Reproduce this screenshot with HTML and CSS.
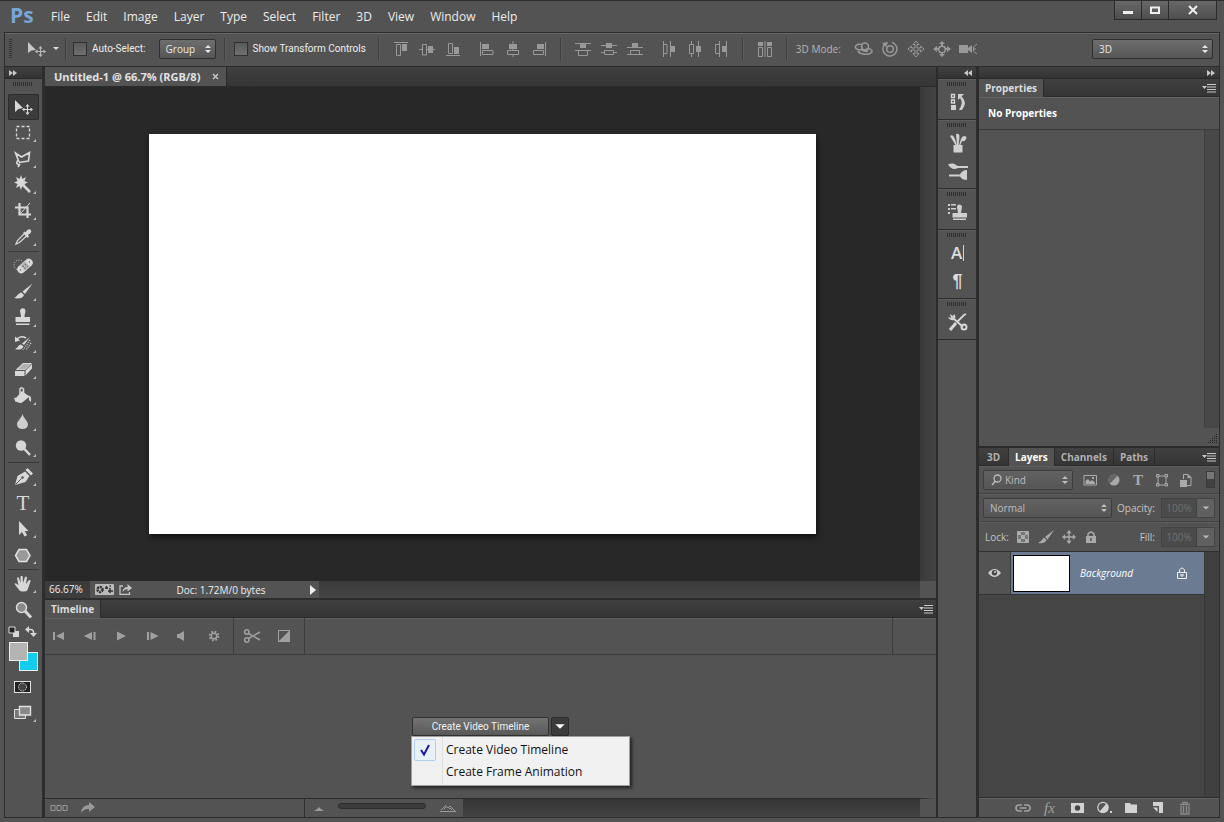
FILE: index.html
```html
<!DOCTYPE html>
<html lang="en">
<head>
<meta charset="utf-8">
<title>Untitled-1 @ 66.7% (RGB/8)</title>
<link rel="stylesheet" href="styles.css">
</head>
<body>
<svg class="defs" aria-hidden="true">
  <symbol id="updown" viewBox="0 0 8 10"><path d="M1 4L4 1L7 4ZM1 6L4 9L7 6Z" fill="currentColor"/></symbol>
  <symbol id="down" viewBox="0 0 10 6"><path d="M1 1H9L5 5Z" fill="currentColor"/></symbol>
  <symbol id="flyout" viewBox="0 0 14 10"><path d="M0 3H5L2.500 6ZM5 1H14V2H5ZM5 3.500H14V4.500H5ZM5 6H14V7H5ZM5 8.500H14V9.500H5Z" fill="currentColor"/></symbol>
  <symbol id="right2" viewBox="0 0 8 6"><path d="M0 0L4 3L0 6ZM4 0L8 3L4 6Z" fill="currentColor"/></symbol>
  <symbol id="left2" viewBox="0 0 8 6"><path d="M4 0L0 3L4 6ZM8 0L4 3L8 6Z" fill="currentColor"/></symbol>
  <symbol id="move" viewBox="0 0 12 12"><path d="M6 1V11M1 6H11" stroke="currentColor" stroke-width="1.200" fill="none"/><path d="M6 0L8.300 2.700H3.700ZM6 12L3.700 9.300H8.300ZM0 6L2.700 3.700V8.300ZM12 6L9.300 8.300V3.700Z" fill="currentColor"/></symbol>
  <symbol id="corner" viewBox="0 0 30 26"><path d="M28 19V22H25Z" fill="#bdbdbd"/></symbol>
</svg>
<div class="app">
  <header class="menubar">
    <span class="logo">Ps</span>
    <nav class="menus">
      <button>File</button><button>Edit</button><button>Image</button><button>Layer</button><button>Type</button><button>Select</button><button>Filter</button><button>3D</button><button>View</button><button>Window</button><button>Help</button>
    </nav>
    <div class="winbtns">
      <button aria-label="Minimize"><svg width="12" height="10" viewBox="0 0 12 10"><rect x="1" y="6" width="10" height="3" fill="#eee"/></svg></button>
      <button aria-label="Maximize"><svg width="12" height="10" viewBox="0 0 12 10"><path d="M2 2.500H10V8H2Z" fill="none" stroke="#eee" stroke-width="2"/></svg></button>
      <button class="close" aria-label="Close"><svg width="12" height="10" viewBox="0 0 12 10"><path d="M2 1L10 9M10 1L2 9" stroke="#eee" stroke-width="2"/></svg></button>
    </div>
  </header>

  <div class="options">
    <i class="vgrip"></i>
    <button class="current" aria-label="Move tool"><svg width="32" height="20" viewBox="0 0 32 20"><path d="M1 3V14L4.500 11.500L9 11Z" fill="#c8c8c8"/><use href="#move" x="8" y="7" width="11" height="11" color="#bbb"/><path d="M26 8H32L29 11Z" fill="#ddd"/></svg></button>
    <i class="sep"></i>
    <label class="check"><input type="checkbox">Auto-Select:</label>
    <div class="select group"><select aria-label="Auto-select target"><option>Group</option></select><svg width="8" height="10"><use href="#updown"/></svg></div>
    <i class="sep"></i>
    <label class="check"><input type="checkbox">Show Transform Controls</label>
    <i class="sep wide"></i>
    <div class="icons align">
      <button aria-label="Align top edges"><svg viewBox="0 0 16 16"><path d="M1 1.500H15M3.500 3.500H7.500V14.500H3.500Z"/><path class="f" d="M9 3H14V10H9Z"/></svg></button>
      <button aria-label="Align vertical centers"><svg viewBox="0 0 16 16"><path d="M0 8.500H3M7 8.500H16M3.500 3.500H7.500V14H3.500Z"/><path class="f" d="M9 5H14V12H9Z"/></svg></button>
      <button aria-label="Align bottom edges"><svg viewBox="0 0 16 16"><path d="M1 14.500H15M3.500 2.500H7.500V12.500H3.500Z"/><path class="f" d="M9 6H14V13H9Z"/></svg></button>
    </div>
    <div class="icons align">
      <button aria-label="Align left edges"><svg viewBox="0 0 16 16"><path d="M1.500 1V15M3.500 9.500H14V13.500H3.500Z"/><path class="f" d="M3 3H10V8H3Z"/></svg></button>
      <button aria-label="Align horizontal centers"><svg viewBox="0 0 16 16"><path d="M8 0V10M8 14V16M2.500 9.500H13.500V13.500H2.500Z"/><path class="f" d="M4 3H12V8H4Z"/></svg></button>
      <button aria-label="Align right edges"><svg viewBox="0 0 16 16"><path d="M14.500 1V15M2.500 9.500H12.500V13.500H2.500Z"/><path class="f" d="M6 3H13V8H6Z"/></svg></button>
    </div>
    <i class="sep"></i>
    <div class="icons align">
      <button aria-label="Distribute top edges"><svg viewBox="0 0 16 16"><path d="M0 2.500H16M0 9.500H16M3.500 9.500H12.500V14.500H3.500Z"/><path class="f" d="M5 3H11V7H5Z"/></svg></button>
      <button aria-label="Distribute vertical centers"><svg viewBox="0 0 16 16"><path d="M0 4.500H16M0 11.500H3M13 11.500H16M3.500 9.500H12.500V13.500H3.500Z"/><path class="f" d="M5 2H11V7H5Z"/></svg></button>
      <button aria-label="Distribute bottom edges"><svg viewBox="0 0 16 16"><path d="M0 6.500H16M0 13.500H16M3.500 9.500H12.500V13.500H3.500Z"/><path class="f" d="M5 2H11V6H5Z"/></svg></button>
    </div>
    <div class="icons align">
      <button aria-label="Distribute left edges"><svg viewBox="0 0 16 16"><path d="M2.500 0V16M9.500 0V16M2.500 3.500H6V12.500H2.500Z"/><path class="f" d="M10 5H14V11H10Z"/></svg></button>
      <button aria-label="Distribute horizontal centers"><svg viewBox="0 0 16 16"><path d="M4.500 0V3M4.500 13V16M11.500 0V16M2.500 3.500H6.500V12.500H2.500Z"/><path class="f" d="M9 5H14V11H9Z"/></svg></button>
      <button aria-label="Distribute right edges"><svg viewBox="0 0 16 16"><path d="M6.500 0V16M13.500 0V16M2.500 3.500H6.500V12.500H2.500Z"/><path class="f" d="M9 5H13V11H9Z"/></svg></button>
    </div>
    <i class="sep"></i>
    <div class="icons align">
      <button aria-label="Auto-align layers"><svg viewBox="0 0 16 16"><path d="M8 0V16M1.500 6.500H5.500V15.500H1.500ZM10.500 6.500H14.500V15.500H10.500Z"/><path class="f" d="M1 1H6V5H1ZM10 1H15V5H10Z"/></svg></button>
    </div>
    <i class="sep"></i>
    <span class="mode">3D Mode:</span>
    <div class="icons">
      <button aria-label="Rotate the 3D object"><svg width="20" height="16" viewBox="0 0 20 16"><g fill="none" stroke="#999" stroke-width="1.500"><circle cx="11" cy="5.500" r="3.500"/><path d="M8 3.500C3 2.500 0 5 2 7.500C4 10 11 8 14 10.500M8 5.500C7 9 10 11 13 10M12 8C18 7 20 11 16 12.500C12 14 5 13 4 10"/></g></svg></button>
      <button aria-label="Roll the 3D object"><svg width="20" height="16" viewBox="0 0 20 16"><g fill="none" stroke="#999" stroke-width="1.500"><circle cx="10" cy="8" r="3.300"/><path d="M5 3A7 7 0 1 0 12 1.300"/></g><path d="M2 2L8 1L6 6Z" fill="#999"/></svg></button>
      <button aria-label="Drag the 3D object"><svg width="20" height="16" viewBox="0 0 20 16"><path d="M10 0L13 3.500H11V7H14.500V5L18 8L14.500 11V9H11V12.500H13L10 16L7 12.500H9V9H5.500V11L2 8L5.500 5V7H9V3.500H7Z" fill="none" stroke="#999"/></svg></button>
      <button aria-label="Slide the 3D object"><svg width="20" height="16" viewBox="0 0 20 16"><path d="M10 0L13 3H11V5H13L14 7H15V5L19 8L15 11V9H14L13 12H11V13H13L10 16L7 13H9V12H7L6 9H5V11L1 8L5 5V7H6L7 5H9V3H7Z" fill="#999"/><circle cx="10" cy="8.500" r="2.500" fill="#535353"/></svg></button>
      <button aria-label="Zoom the 3D camera"><svg width="20" height="16" viewBox="0 0 20 16"><path d="M1 4H10V12H1ZM10 7L14 4V12L10 9Z" fill="#999"/><path d="M19 3L15.500 6V10L19 13M15.500 8H18" fill="none" stroke="#999"/></svg></button>
    </div>
    <div class="select workspace"><select aria-label="Workspace"><option>3D</option></select><svg width="8" height="10"><use href="#updown"/></svg></div>
  </div>

  <div class="work">
    <aside class="tools">
      <div class="collapse start"><svg width="8" height="6"><use href="#right2"/></svg></div>
      <i class="grip"></i>
      <div class="toollist">
        <button class="on" aria-label="Move"><svg viewBox="0 0 30 26"><path d="M7 6V18L10.500 15L15 14Z"/><use href="#move" x="14" y="10" width="11" height="11"/></svg></button>
        <button aria-label="Marquee"><svg viewBox="0 0 30 26"><rect class="l" x="8.500" y="6.500" width="13" height="12" stroke-width="1.300" stroke-dasharray="3 2"/><use href="#corner"/></svg></button>
        <button aria-label="Lasso"><svg viewBox="0 0 30 26"><path class="l" stroke-width="1.600" d="M11 16L7.500 7L13.500 11L21.500 6.500L20.500 15L11 16.500M11 14.500A2 2 0 1 0 12 18L10 21"/><use href="#corner"/></svg></button>
        <button aria-label="Magic wand"><svg viewBox="0 0 30 26"><path d="M13 3L14.300 7L18 5L16.500 9L20 10.500L16.500 12L18 16L14.300 14L13 18L11.500 14L8 16L9.500 12L6 10.500L9.500 9L8 5L11.500 7Z"/><path class="l" stroke-width="2.500" d="M15 13L22 20"/><use href="#corner"/></svg></button>
        <button aria-label="Crop"><svg viewBox="0 0 30 26"><path class="l" stroke-width="2.200" d="M7 9.500H19.500V20M11.500 5V16.500H23"/><path class="l" d="M12 16L22 5"/><use href="#corner"/></svg></button>
        <button aria-label="Eyedropper"><svg viewBox="0 0 30 26"><path d="M15 9L16.500 7.500L17.500 8.300L19.500 5.800Q22 4.300 23 6.200Q24 8 22 9.500L20 11L21 12.500L19.500 14Z"/><path class="l" stroke-width="1.300" d="M16 10L9.500 16.500L8 20L11.500 18.500L18.500 12"/><use href="#corner"/></svg></button>
        <hr>
        <button aria-label="Healing brush"><svg viewBox="0 0 30 26"><circle class="l" cx="11" cy="12" r="5" stroke-dasharray="1 1.500"/><g transform="rotate(-42 17 13)"><rect x="8" y="9" width="18" height="8" rx="4"/><rect x="14" y="9.500" width="6" height="7" fill="#b4b4b4"/><path d="M15 12H16M18 12H19M15 14.500H16M18 14.500H19M10.500 13H11.500M22.500 13H23.500" stroke="#444"/></g><use href="#corner"/></svg></button>
        <button aria-label="Brush"><svg viewBox="0 0 30 26"><path d="M24.500 4.500L17 15L14.500 12.500ZM13.500 13.500L16 16C15 19.500 10 20 6 19C9 18 10 14 13.500 13.500Z"/><use href="#corner"/></svg></button>
        <button aria-label="Clone stamp"><svg viewBox="0 0 30 26"><path d="M12 5.500A2.800 2.800 0 0 1 17.500 5.500C17.500 8 16.500 9 16.500 12H22V17H7.500V12H13C13 9 12 8 12 5.500ZM8 18.500H21.500V20H8Z"/><use href="#corner"/></svg></button>
        <button aria-label="History brush"><svg viewBox="0 0 30 26"><path d="M22 6L16 14L14 12.500ZM13 13.500L15.500 15.500C14 19 10 19 7 18C10 17 10 14 13 13.500Z"/><path class="l" stroke-width="1.500" d="M9 8Q13 4 18 7"/><path d="M7 5.500V11L12 9.500Z"/><path class="l" stroke-width="1.300" stroke-dasharray="1 1.300" d="M22 9L15 19M23 12L18 19"/><use href="#corner"/></svg></button>
        <button aria-label="Eraser"><svg viewBox="0 0 30 26"><path d="M15 6H24L17 13H7.500ZM7 14H16.500V19H7ZM17.500 13.500L24 7V11.500L17.500 18.500Z"/><path d="M15.500 7H22L16.500 12.300H10Z" fill="#b0b0b0"/><use href="#corner"/></svg></button>
        <button aria-label="Paint bucket"><svg viewBox="0 0 30 26"><path d="M7 16L14 8L20 12.500Q24 12 23 19L21 17V14L13.500 20Q7.500 20 7 16Z"/><path class="l" stroke-width="1.500" d="M12 11V6Q13.500 3.500 15.500 6V11"/><path d="M6 15Q8 13 9 18L7.500 19Z"/><use href="#corner"/></svg></button>
        <button aria-label="Blur"><svg viewBox="0 0 30 26"><path d="M14.500 5C16 10 20 12 20 15.500Q19.500 20 14.500 20Q9.500 20 9 15.500C9 12 13 10 14.500 5Z" fill="#cfcfcf"/><use href="#corner"/></svg></button>
        <button aria-label="Dodge"><svg viewBox="0 0 30 26"><circle cx="13" cy="10.500" r="5.200"/><path class="l" stroke-width="2.500" d="M16 13.500L22 20"/><use href="#corner"/></svg></button>
        <hr>
        <button aria-label="Pen"><svg viewBox="0 0 30 26"><path d="M7 21L9.500 12L17 7.500L21.500 12L17.500 18ZM17.500 6L19.500 4L25 9.500L23 11.500Z"/><path d="M7.500 20.500L13.500 14.500" stroke="#555"/><circle cx="14.500" cy="13.500" r="1.300" fill="#555"/><use href="#corner"/></svg></button>
        <button aria-label="Type" class="serif"><span>T</span><svg viewBox="0 0 30 26"><use href="#corner"/></svg></button>
        <button aria-label="Path selection"><svg viewBox="0 0 30 26"><path d="M11 5V19L14 16L16.500 20.500L19 19.300L16.800 15H20.500Z"/><use href="#corner"/></svg></button>
        <button aria-label="Polygon shape"><svg viewBox="0 0 30 26"><path d="M11 7.500H18.500L22 13.500L18.500 19.500H11L7.500 13.500Z" fill="#999" stroke="#e2e2e2" stroke-width="1.500"/><use href="#corner"/></svg></button>
        <hr>
        <button aria-label="Hand"><svg viewBox="0 0 30 26"><path d="M12 20L6.500 13Q7 11.500 9 13L10.500 14.500L9 7Q10 5.500 11 7L12.500 12V5.500Q13.700 4 14.700 5.500L15 12L17 6Q18.500 5 19 6.500L18 13L21 9Q23 8.500 22.500 10.500L19.500 19Q18 21.500 12 20Z"/><use href="#corner"/></svg></button>
        <button aria-label="Zoom"><svg viewBox="0 0 30 26"><path class="l" stroke-width="3" d="M17 14L23 20.500"/><circle cx="13.500" cy="10.500" r="5" fill="#8a8a8a" stroke="#ddd" stroke-width="1.500"/></svg></button>
        <div class="mini">
          <button aria-label="Default colors"><svg width="11" height="11" viewBox="0 0 11 11"><path d="M5 5H11V11H5Z"/><path d="M1 1H7V7H1Z" fill="#222" stroke="#ddd"/></svg></button>
          <button aria-label="Swap colors"><svg width="12" height="11" viewBox="0 0 12 11"><path class="l" stroke-width="1.500" d="M3 3.500H6Q9 4 8.500 8"/><path d="M0 3.500L4 0V7ZM5 7H12L8.500 11Z"/></svg></button>
        </div>
        <div class="swatches"><button class="bg" aria-label="Background color"></button><button class="fg" aria-label="Foreground color"></button></div>
        <button aria-label="Quick mask"><svg viewBox="0 0 30 26"><rect x="6.500" y="7.500" width="16" height="11" fill="#222" stroke="#e2e2e2"/><circle cx="14.500" cy="13" r="4" fill="#444" stroke="#ddd" stroke-dasharray="1.300 1"/></svg></button>
        <button aria-label="Screen mode"><svg viewBox="0 0 30 26"><path d="M6.500 9.500H17.500V18.500H6.500Z" fill="#777" stroke="#ddd"/><path d="M11.500 6.500H22.500V15H11.500Z" fill="#888" stroke="#e2e2e2" stroke-width="1.400"/><use href="#corner"/></svg></button>
      </div>
    </aside>

    <main class="center">
      <div class="doctabs"><div class="doctab">Untitled-1 @ 66.7% (RGB/8)<button aria-label="Close document"><svg width="7" height="7" viewBox="0 0 7 7"><path d="M1 1L6 6M6 1L1 6" stroke="#ccc" stroke-width="1.300"/></svg></button></div></div>
      <div class="doc">
        <div class="stage"><div class="artboard"></div></div>
        <div class="vscroll"></div>
        <div class="status">
          <input class="zoom" aria-label="Zoom level" value="66.67%">
          <div class="info">
            <svg width="19" height="11" viewBox="0 0 19 11"><rect width="19" height="11" rx="1" fill="#bbb"/><circle cx="5" cy="5.500" r="2.500" fill="none" stroke="#333" stroke-width="2.500" stroke-dasharray="2 .8"/><path d="M10 4H13M11.500 2V5M13 7H18M15 4V9M14.500 2H16" fill="none" stroke="#333" stroke-width="1.500"/></svg>
            <svg width="13" height="11" viewBox="0 0 13 11"><path d="M4 2H1V10.500H10.500V8" fill="none" stroke="#c4c4c4" stroke-width="1.300"/><path d="M3.500 8Q4 3 8.500 3V0L13 4L8.500 7.500V5Q5.500 5 3.500 8Z" fill="#c4c4c4"/></svg>
            <span>Doc: 1.72M/0 bytes</span>
            <button aria-label="Status options"><svg width="6" height="10" viewBox="0 0 6 10"><path d="M0 0L6 5L0 10Z" fill="#eee"/></svg></button>
          </div>
        </div>
        <div class="scrollcorner"></div>
      </div>

      <section class="timeline">
        <div class="tabs"><button class="tab on">Timeline</button><svg class="fly" width="14" height="10"><use href="#flyout"/></svg></div>
        <div class="transport">
          <div class="play">
            <button aria-label="First frame"><svg viewBox="0 0 16 16"><path d="M2 4H4V12H2ZM13 4V12L5 8Z"/></svg></button>
            <button aria-label="Previous frame"><svg viewBox="0 0 16 16"><path d="M10 4V12L2 8ZM11.500 4H13.500V12H11.500Z"/></svg></button>
            <button aria-label="Play"><svg viewBox="0 0 16 16"><path d="M4 3.500V12.500L13 8Z"/></svg></button>
            <button aria-label="Next frame"><svg viewBox="0 0 16 16"><path d="M3 4H5V12H3ZM6.500 4V12L14.500 8Z"/></svg></button>
            <button aria-label="Mute audio"><svg viewBox="0 0 16 16"><path d="M2 6H4L9 3V13L4 10H2Z"/></svg></button>
            <button aria-label="Timeline settings"><svg viewBox="0 0 16 16"><circle cx="8" cy="8" r="4.300" fill="none" stroke="#a0a0a0" stroke-width="2" stroke-dasharray="1.800 1.580"/><circle cx="8" cy="8" r="2.800" fill="none" stroke="#a0a0a0" stroke-width="1.500"/></svg></button>
          </div>
          <div class="edit">
            <button aria-label="Split at playhead"><svg viewBox="0 0 18 16"><g fill="none" stroke="#a0a0a0" stroke-width="1.500"><circle cx="3.800" cy="4" r="2.200"/><circle cx="3.800" cy="12" r="2.200"/><path d="M5.500 5.500L17 12M5.500 10.500L17 4"/></g></svg></button>
            <button aria-label="Transition"><svg viewBox="0 0 16 16"><rect x="2.500" y="2.500" width="11" height="11" fill="none" stroke="#a0a0a0"/><path d="M13 3V13H3Z"/></svg></button>
          </div>
          <div class="trackend"></div>
        </div>
        <div class="tbody">
          <div class="create">
            <button class="primary">Create Video Timeline</button>
            <button class="drop" aria-label="Timeline type"><svg width="12" height="7" viewBox="0 0 10 6"><use href="#down" width="10" height="6"/></svg></button>
            <div class="popup" role="menu">
              <button role="menuitemradio" aria-checked="true"><i class="mark"><svg width="12" height="14" viewBox="0 0 12 14"><path d="M2 7L5 11.500L10 2" fill="none" stroke="#1c1c9c" stroke-width="2"/></svg></i>Create Video Timeline</button>
              <button role="menuitemradio" aria-checked="false"><i></i>Create Frame Animation</button>
            </div>
          </div>
        </div>
        <div class="tfoot">
          <div class="tfleft">
            <button aria-label="Convert to frame animation"><svg width="18" height="8" viewBox="0 0 18 8"><path d="M1 1.500H5V6.500H1ZM7 1.500H11V6.500H7ZM13 1.500H17V6.500H13Z" fill="none" stroke="#999"/></svg></button>
            <button aria-label="Render video"><svg width="14" height="12" viewBox="0 0 14 12"><path d="M0 11Q1 3 8 3V0L14 5L8 10V7Q3 6.500 0 11Z" fill="#999"/></svg></button>
          </div>
          <div class="tfzoom">
            <svg width="10" height="5" viewBox="0 0 10 5"><path d="M0 5L3 3L4 2L5 1L7 3L10 5Z" fill="#999"/></svg>
            <input type="range" aria-label="Timeline zoom" value="0">
            <svg width="16" height="8" viewBox="0 0 16 8"><path d="M0 7.500H16M1 6L6 1.500L8 4L10 2L15 7M4 5L6 3M9 5L10 4L12 6" stroke="#999" fill="none"/></svg>
          </div>
        </div>
      </section>
    </main>

    <aside class="dock">
      <div class="collapse end"><svg width="8" height="6"><use href="#left2"/></svg></div>
      <div class="dg"><i class="grip"></i>
        <button aria-label="History"><svg viewBox="0 0 20 20"><path d="M3.500 2.500H6.500V5.500H3.500ZM3.500 8H6.500V11H3.500Z" class="l" stroke-width="1.300"/><path d="M3 13H8V18H3ZM10 2H16L13.500 4.500Q20 10 14 18H11Q16 10 12 6L10 8Z"/></svg></button></div>
      <div class="dg"><i class="grip"></i>
        <button aria-label="Brushes"><svg viewBox="0 0 20 20"><path d="M5.500 12H14.500V19.500H5.500ZM8 1Q11.500 0 11.500 4L10.500 12H9ZM2 3Q5 1 6.500 5L9 12H7.500ZM18.500 4Q15 1 13 6L11 12H12.500L14 8Q18 9 18.500 4Z"/></svg></button>
        <button aria-label="Brush presets"><svg viewBox="0 0 20 20"><path d="M0 3.500Q5 1.500 8 4L10 5H20V7H10Q4 10 0 3.500ZM1 13.500H12Q14 9 19 9V19Q14 19 12 15.500H1Z"/></svg></button></div>
      <div class="dg"><i class="grip"></i>
        <button aria-label="Clone source"><svg viewBox="0 0 20 20"><path d="M0 2H2V4H0ZM3 2H8V3.500H3ZM0 6H2V8H0ZM3 6H8V7.500H3ZM0 10H2V12H0ZM9 5A2.500 2.500 0 0 1 14 5L13 11H19V15.500H4.500V11H10ZM5 16.500H18V18H5Z"/></svg></button></div>
      <div class="dg"><i class="grip"></i>
        <button class="char" aria-label="Character">A<i class="caret"></i></button>
        <button class="para" aria-label="Paragraph">¶</button></div>
      <div class="dg"><i class="grip"></i>
        <button aria-label="Tool presets"><svg viewBox="0 0 20 20"><path class="l" stroke-width="3" d="M2 18L8 11"/><path class="l" stroke-width="1.800" d="M9 10L16 3L18 2M5 6L15 15"/><path d="M2 2L5 4L6 2Q9 5 6 8Q2 9 0 5L3 6Z"/><circle class="l" stroke-width="2" cx="16" cy="15" r="2.500"/></svg></button></div>
    </aside>

    <aside class="panels">
      <div class="collapse end"><svg width="8" height="6"><use href="#right2"/></svg></div>
      <section class="props">
        <div class="tabs"><button class="tab on">Properties</button><svg class="fly" width="14" height="10"><use href="#flyout"/></svg></div>
        <h2>No Properties</h2>
        <div class="pbody"><div></div><div class="pscroll"></div><svg class="resize" width="10" height="10" viewBox="0 0 10 10"><path d="M9.500 0V10M7.500 2V10M5.500 4V10M3.500 6V10M1.500 8V10" stroke="#222" stroke-dasharray="1 1"/></svg></div>
      </section>
      <section class="layers">
        <div class="tabs"><button class="tab">3D</button><button class="tab on bright">Layers</button><button class="tab">Channels</button><button class="tab">Paths</button><svg class="fly" width="14" height="10"><use href="#flyout"/></svg></div>
        <div class="lrow filter">
          <div class="select kind"><svg class="mag" width="11" height="12" viewBox="0 0 11 12"><circle cx="6.500" cy="4.500" r="3.500" fill="none" stroke="#bbb" stroke-width="1.300"/><path d="M4.500 7L1 11" stroke="#bbb" stroke-width="1.500"/></svg><select aria-label="Filter kind"><option>Kind</option></select><svg width="8" height="10"><use href="#updown"/></svg></div>
          <div class="ficons">
            <button aria-label="Pixel layers"><svg viewBox="0 0 14 14"><path d="M1 2.500H13.500V12H1Z" fill="none" stroke="#aaa"/><path d="M2.500 11V8L5 6L7 8.500L9 7L12 9.500V11ZM9 4H11V6H9Z"/></svg></button>
            <button aria-label="Adjustment layers"><svg viewBox="0 0 14 14"><circle cx="7" cy="7" r="5.500"/><path d="M3 10.500A5 5 0 0 1 10.500 3Z" fill="#666"/></svg></button>
            <button class="serif" aria-label="Type layers">T</button>
            <button aria-label="Shape layers"><svg viewBox="0 0 14 14"><path d="M3 3H11V12H3Z" fill="none" stroke="#aaa"/><path d="M1.500 1.500H4V4H1.500ZM10 1.500H12.500V4H10ZM1.500 10.500H4V13H1.500ZM10 10.500H12.500V13H10Z" fill="#666" stroke="#aaa"/></svg></button>
            <button aria-label="Smart objects"><svg viewBox="0 0 14 14"><path d="M4.500 6V1.500H9L12 4.500V12.500H8" fill="none" stroke="#aaa"/><path d="M1 7H8V14H1ZM8.500 1L12.500 5H8.500Z"/></svg></button>
          </div>
          <button class="toggle" aria-label="Toggle filtering"></button>
        </div>
        <div class="lrow">
          <div class="select blend"><select aria-label="Blend mode"><option>Normal</option></select><svg width="8" height="10"><use href="#updown"/></svg></div>
          <label class="num">Opacity:<input value="100%"></label><button class="step" aria-label="Opacity slider"><svg width="8" height="6" viewBox="0 0 10 6"><use href="#down" width="10" height="6"/></svg></button>
        </div>
        <div class="lrow lock">
          <span>Lock:</span>
          <div class="licons">
            <button aria-label="Lock transparency"><svg viewBox="0 0 14 14"><path d="M1.500 1.500H12.500V12.500H1.500Z" fill="#777" stroke="#aaa"/><path d="M2 2H5V5H2ZM9 2H12V5H9ZM5 5H9V9H5ZM2 9H5V12H2ZM9 9H12V12H9Z"/></svg></button>
            <button aria-label="Lock pixels"><svg viewBox="0 0 16 14"><path d="M16 0L9.500 9.500L7 7ZM6 7.500L8.500 10Q7 14 0 13Q3 12 6 7.500Z"/></svg></button>
            <button aria-label="Lock position"><svg viewBox="0 0 14 14"><use href="#move" x="0" y="0" width="14" height="14"/></svg></button>
            <button aria-label="Lock all"><svg viewBox="0 0 14 14"><path d="M4 6V4Q7 0 10 4V6" fill="none" stroke="#aaa" stroke-width="1.500"/><path d="M2 6H12V13H2Z"/><path d="M7 8V11" stroke="#555" stroke-width="1.500"/></svg></button>
          </div>
          <label class="num">Fill:<input value="100%"></label><button class="step" aria-label="Fill slider"><svg width="8" height="6" viewBox="0 0 10 6"><use href="#down" width="10" height="6"/></svg></button>
        </div>
        <div class="list">
          <div class="items">
            <div class="layer">
              <button class="eye" aria-label="Toggle visibility"><svg width="13" height="10" viewBox="0 0 13 10"><path d="M0 5Q6.500 -3 13 5Q6.500 13 0 5Z" fill="#ccc"/><circle cx="6.500" cy="4.800" r="2.700" fill="#444"/><circle cx="7" cy="4" r="1" fill="#ddd"/></svg></button>
              <div class="lsel"><span class="thumb"></span><em>Background</em><svg width="10" height="12" viewBox="0 0 10 12"><path d="M2.500 5V3Q5 -1 7.500 3V5M.500 5.500H9.500V11.500H.500ZM3 8H7M5 7V10" fill="none" stroke="#eee"/></svg></div>
            </div>
          </div>
          <div class="lscroll"></div>
        </div>
        <div class="lfoot">
          <button class="dim" aria-label="Link layers"><svg viewBox="0 0 16 14"><path d="M7 10H4Q1 10 1 7Q1 4 4 4H7M9 4H12Q15 4 15 7Q15 10 12 10H9M4.500 7H11.500" fill="none" stroke="#a0a0a0" stroke-width="1.600"/></svg></button>
          <button class="dim fx" aria-label="Layer style">fx</button>
          <button aria-label="Add mask"><svg viewBox="0 0 16 14"><path d="M2 2H15V12H2Z"/><circle cx="8.500" cy="7" r="2.700" fill="#444"/></svg></button>
          <button aria-label="Adjustment layer"><svg viewBox="0 0 16 14"><circle cx="7" cy="6.500" r="5.800"/><path d="M4 10A4.500 4.500 0 0 1 10 3Z" fill="#555"/><path d="M14 10H16V12H14Z"/></svg></button>
          <button aria-label="New group"><svg viewBox="0 0 16 14"><path d="M2 2H7L8 3.500H14V12H2Z"/></svg></button>
          <button aria-label="New layer"><svg viewBox="0 0 16 14"><path d="M3 1H13V12H9V5H3Z"/><path d="M3 6.500H7.500V11Z"/></svg></button>
          <button class="dim" aria-label="Delete layer"><svg viewBox="0 0 16 14"><path d="M3 3.500H13M6 3V1.500H10V3M4 5V13H12V5M6.500 5V12M9.500 5V12" fill="none" stroke="#8a8a8a" stroke-width="1.300"/></svg></button>
        </div>
      </section>
    </aside>
  </div>
</div>
</body>
</html>
```
FILE: styles.css
```css
* { box-sizing: border-box; }
html, body { height: 100%; margin: 0; }
body {
  background: #535353;
  color: #e2e2e2;
  font: 10px/14px "Open Sans", "Noto Sans", sans-serif;
}
button, input, select { font: inherit; color: inherit; margin: 0; }
button { background: none; border: 0; padding: 0; display: flex; align-items: center; justify-content: center; }
svg { display: block; flex: none; }
i { display: block; flex: none; }
.defs { position: absolute; width: 0; height: 0; }

.app {
  display: flex; flex-direction: column; height: 100vh;
  border-top: 1px solid #2e2e2e;
  padding: 0 4px 4px;
}

/* Title and menu bar */
.menubar { display: flex; height: 32px; flex: none; align-items: flex-start; }
.logo { width: 39px; padding-left: 6px; font: bold 21px/28px "Open Sans", sans-serif; color: #76a5d8; }
.menus { display: flex; height: 32px; flex: 1; font: 12px/16px "Open Sans", sans-serif; color: #ececec; }
.menus button { padding: 0 8px; }
.winbtns { display: flex; border: 1px solid #2b2b2b; border-top: 0; margin-right: 3px; }
.winbtns button { width: 27px; height: 18px; background: linear-gradient(#686868, #4e4e4e); border-right: 1px solid #2b2b2b; }
.winbtns .close { width: 47px; border-right: 0; }

/* Options bar */
.options {
  display: flex; align-items: center; height: 35px; flex: none;
  border: 1px solid #2c2c2c;
  box-shadow: inset 0 1px #676767;
  padding: 0 6px 1px 4px; margin-top: -1px;
}
.vgrip { width: 3px; height: 20px; background: repeating-linear-gradient(#333 0 1px, #535353 1px 2px); }
.current { margin: 0 6px 0 15px; }
.sep { width: 2px; height: 22px; background: #3d3d3d; border-right: 1px solid #5d5d5d; margin: 0 8px; }
.current + .sep { margin: 0 6px 0 0; }
.sep.wide { margin: 0 8px 0 12px; }
.check { display: flex; align-items: center; gap: 5px; white-space: nowrap; color: #eee; }
.options .check { font-family: Roboto, "Open Sans", sans-serif; }
.check input {
  appearance: none; width: 14px; height: 14px;
  background: linear-gradient(#5a5a5a, #707070); border: 1px solid #303030;
}
.select { position: relative; display: flex; align-items: center; border: 1px solid #2f2f2f; border-radius: 2px; background: linear-gradient(#6e6e6e, #565656); height: 20px; color: #e8e8e8; }
.select select { appearance: none; background: none; border: 0; padding: 0 6px; width: 100%; height: 100%; outline: 0; }
.select > svg:last-child { position: absolute; right: 3px; top: 4px; pointer-events: none; }
.group { width: 57px; margin-left: 13px; }
.icons { display: flex; }
.icons button { width: 26px; height: 24px; }
.align svg { width: 16px; height: 16px; fill: none; stroke: #999; }
.align .f { fill: #999; stroke: none; }
.align + .align { margin-left: 8px; }
.mode { color: #b5b5b5; margin-right: 10px; white-space: nowrap; }
.workspace { width: 121px; margin-left: auto; }

/* Work area */
.work { display: flex; flex: 1; min-height: 0; border: 1px solid #2c2c2c; border-top: 0; }
.collapse { height: 12px; flex: none; display: flex; align-items: center; background: linear-gradient(#404040, #333); border-bottom: 1px solid #282828; color: #c8c8c8; padding: 0 4px; }
.collapse.end { justify-content: flex-end; }
.grip { width: 20px; height: 4px; background: repeating-linear-gradient(90deg, #2f2f2f 0 1px, #535353 1px 2px); }

.tools { width: 40px; flex: none; border-right: 3px solid #2d2d2d; display: flex; flex-direction: column; }
.tools > .grip { margin: 3px 8px 8px; }
.toollist { padding: 0 3px; fill: #d8d8d8; color: #d8d8d8; }
.toollist > button { width: 31px; height: 26px; justify-content: flex-start; }
.toollist > button > svg { width: 30px; height: 26px; }
.toollist > .on { background: #3b3b3b; box-shadow: inset 0 0 0 1px #2c2c2c; border-radius: 2px; }
.toollist hr { border: 0; border-top: 1px solid #3a3a3a; height: 1px; margin: 1px 0; }
.l { fill: none; stroke: #d8d8d8; }
.toollist > .serif { display: grid; font: 21px/26px "Liberation Serif", serif; }
.toollist .serif > * { grid-area: 1 / 1; text-align: center; }
.mini { display: flex; justify-content: space-between; align-items: center; height: 17px; padding-right: 2px; }
.swatches { position: relative; height: 34px; }
.swatches button { position: absolute; width: 19px; height: 19px; border: 1px solid #eee; }
.swatches .fg { left: 1px; top: 2px; background: #b4b4b4; }
.swatches .bg { left: 11px; top: 12px; background: #14cdec; }

.center { flex: 1; min-width: 0; display: flex; flex-direction: column; }
.doctabs { height: 20px; flex: none; background: linear-gradient(#404040, #353535); border-bottom: 1px solid #2b2b2b; display: flex; }
.doctab { display: flex; align-items: center; gap: 12px; padding: 0 7px 0 9px; background: #535353; border-right: 1px solid #2b2b2b; font: bold 11px/18px "Open Sans", sans-serif; white-space: nowrap; }
.doc { flex: 1; min-height: 0; display: grid; grid-template: minmax(0, 1fr) 17px / minmax(0, 1fr) 16px; border-bottom: 2px solid #2d2d2d; }
.stage { background: #282828; display: grid; place-items: center; overflow: hidden; }
.artboard { width: 667px; max-width: 80%; aspect-ratio: 667 / 400; background: #fff; box-shadow: 1px 3px 5px #111; }
.vscroll { background: linear-gradient(90deg, #3a3a3a, #434343); }
.status { background: linear-gradient(#3a3a3a, #464646); display: flex; }
.scrollcorner { background: #535353; }
.zoom { width: 45px; border: 0; background: #3c3c3c; padding: 0 0 2px 4px; outline: 0; color: #eee; }
.info { display: flex; align-items: center; gap: 5px; width: 229px; padding: 0 3px 0 5px; background: #535353; color: #eee; }
.info span { flex: 1; text-align: center; }

.tabs { display: flex; height: 18px; flex: none; background: linear-gradient(#404040, #353535); border-bottom: 1px solid #2b2b2b; }
.tab { padding: 0 6px; font-weight: bold; color: #b0b0b0; border-right: 1px solid #2b2b2b; }
.tab.on { background: #535353; color: #dcdcdc; margin-bottom: -1px; }
.tab.bright { color: #fff; }
.fly { margin: 4px 3px 0 auto; color: #c8c8c8; }

.timeline { height: 217px; flex: none; display: flex; flex-direction: column; }
.transport { height: 37px; flex: none; display: flex; border-bottom: 1px solid #3c3c3c; box-shadow: inset 0 1px #606060; }
.transport svg { width: 16px; height: 16px; fill: #a0a0a0; }
.play { display: flex; align-items: center; gap: 15px; padding: 0 11px 0 6px; border-right: 1px solid #3c3c3c; }
.edit { display: flex; align-items: center; gap: 15px; padding: 0 12px 0 9px; border-right: 1px solid #3c3c3c; }
.edit button:first-child svg { width: 18px; }
.trackend { width: 44px; margin-left: auto; border-left: 1px solid #3c3c3c; }
.tbody { flex: 1; display: flex; align-items: center; justify-content: center; }
.create { position: relative; display: flex; gap: 2px; }
.create .primary { width: 137px; height: 19px; background: linear-gradient(#737373, #595959); border: 1px solid #313131; border-radius: 2px; color: #f2f2f2; font-family: Roboto, "Open Sans", sans-serif; }
.create .drop { width: 18px; height: 19px; background: #3c3c3c; border: 1px solid #2b2b2b; border-radius: 2px; color: #fff; }
.popup { position: absolute; left: -1px; top: 19px; width: 219px; background: linear-gradient(90deg, #f0f0f0 30px, #e0e0e0 30px 31px, #f1f1f1 31px); border: 1px solid #a0a0a0; box-shadow: 2px 2px 3px #222; padding: 2px; z-index: 2; }
.popup button { width: 100%; height: 22px; justify-content: flex-start; gap: 10px; color: #111; font: 12px/16px "Open Sans", sans-serif; }
.popup i { width: 22px; height: 22px; display: grid; place-items: center; }
.popup .mark { background: #e8f0f8; border: 1px solid #aecff0; border-radius: 2px; }
.tfoot { height: 19px; flex: none; display: flex; background: linear-gradient(#353535, #434343); border-top: 1px solid #2b2b2b; border-right: 16px solid #535353; }
.tfleft { width: 260px; display: flex; align-items: center; gap: 13px; padding-left: 5px; background: #535353; border-right: 1px solid #303030; }
.tfzoom { width: 158px; display: flex; align-items: center; gap: 14px; background: #535353; padding: 0 7px 0 9px; }
.tfzoom input { appearance: none; flex: 1; min-width: 0; height: 6px; background: #3c3c3c; border: 1px solid #2c2c2c; border-radius: 3px; margin-bottom: 4px; }
.tfzoom input::-webkit-slider-thumb { appearance: none; width: 0; height: 0; }

.dock { width: 43px; flex: none; border: solid #2c2c2c; border-width: 0 3px 0 2px; fill: #d0d0d0; display: flex; flex-direction: column; }
.dg { border-bottom: 1px solid #2c2c2c; box-shadow: inset 0 1px #5e5e5e; padding: 3px 0 3px 4px; display: flex; flex-direction: column; }
.dg .grip { margin: 0 5px 2px; }
.dg button { width: 31px; height: 28px; }
.dg svg { width: 20px; height: 20px; }
.dg .char { gap: 1px; font: 600 17px/24px "Open Sans", sans-serif; color: #ddd; }
.caret { width: 1px; height: 16px; background: #d0d0d0; }
.dg .para { font: bold 18px/24px "Liberation Sans", sans-serif; color: #ddd; }

.panels { width: 240px; flex: none; display: flex; flex-direction: column; }
.props { flex: 1; min-height: 0; display: flex; flex-direction: column; border-bottom: 2px solid #2b2b2b; }
.props h2 { margin: 0; padding: 9px 9px; height: 33px; font: bold 10px/15px "Open Sans", sans-serif; color: #fff; border-bottom: 1px solid #3b3b3b; box-shadow: inset 0 1px #636363; }
.pbody { flex: 1; display: grid; grid-template: 1fr 18px / 1fr 15px; }
.pscroll { background: #484848; border-left: 1px solid #3f3f3f; }
.resize { grid-column: 2; align-self: end; justify-self: end; margin: 0 2px 2px 0; }

.layers { height: 369px; flex: none; display: flex; flex-direction: column; }
.layers .tab { min-width: 30px; }
.lrow { display: flex; align-items: center; height: 28px; flex: none; padding: 0 4px 0 4px; border-bottom: 1px solid #424242; box-shadow: inset 0 1px #5d5d5d; color: #c4c4c4; }
.lrow .select { border-color: #3d3d3d; background: linear-gradient(#626262, #555); color: #bdbdbd; }
.kind { width: 90px; }
.kind .mag { margin-left: 7px; }
.kind select { padding-left: 3px; }
.ficons { display: flex; gap: 10px; margin-left: 10px; fill: #aaa; }
.ficons button { width: 14px; height: 14px; }
.ficons svg { width: 14px; height: 14px; }
.ficons .serif { font: bold 15px/14px "Liberation Serif", serif; color: #aaa; }
.toggle { width: 9px; height: 17px; margin-left: auto; border: 1px solid #3b3b3b; background: linear-gradient(#777 50%, #424242 50%); }
.blend { width: 129px; }
.num { display: flex; align-items: center; gap: 6px; margin-left: auto; }
.num input { width: 36px; height: 20px; border: 1px solid #434343; background: #4b4b4b; color: #707070; padding: 0 4px; text-align: center; }
.step { width: 18px; height: 20px; border: 1px solid #434343; border-left: 0; background: #606060; color: #bbb; }
.lock { height: 30px; border-bottom-color: #2f2f2f; }
.lock > span { padding-left: 2px; }
.licons { display: flex; gap: 8px; margin-left: 7px; fill: #aaa; color: #aaa; }
.licons svg { height: 14px; min-width: 14px; }
.list { flex: 1; display: flex; background: #454545; min-height: 0; }
.items { flex: 1; }
.layer { display: flex; height: 43px; border-bottom: 1px solid #333; }
.eye { width: 32px; background: #535353; border-right: 1px solid #3a3a3a; }
.lsel { flex: 1; display: flex; align-items: center; background: #6b7c92; padding: 0 17px 0 2px; }
.thumb { width: 57px; height: 37px; border: 1px solid #000; background: #fff; margin-right: 10px; }
.lsel em { flex: 1; color: #fff; }
.lscroll { width: 15px; background: #404040; border-left: 1px solid #373737; }
.lfoot { height: 20px; flex: none; display: flex; gap: 11px; justify-content: center; align-items: center; border-top: 1px solid #2c2c2c; box-shadow: inset 0 1px #626262; fill: #d2d2d2; padding-left: 9px; }
.lfoot button { width: 16px; height: 14px; }
.lfoot svg { width: 16px; height: 14px; }
.fx { font: italic 15px/14px "Liberation Serif", serif; color: #a0a0a0; }
```
